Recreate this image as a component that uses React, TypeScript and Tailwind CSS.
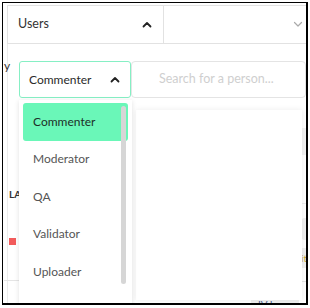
import React from 'react'

const roles = ['Commenter', 'Moderator', 'QA', 'Validator', 'Uploader']

function ChevronUp({ className = '' }: { className?: string }) {
  return (
    <svg width="10" height="7" viewBox="0 0 10 7" className={className}>
      <path d="M1.5 5.5 L5 2 L8.5 5.5" fill="none" stroke="currentColor" strokeWidth="1.8" strokeLinecap="round" strokeLinejoin="round" />
    </svg>
  )
}

function ChevronDown({ className = '' }: { className?: string }) {
  return (
    <svg width="10" height="7" viewBox="0 0 10 7" className={className}>
      <path d="M1.5 1.5 L5 5 L8.5 1.5" fill="none" stroke="currentColor" strokeWidth="1.2" strokeLinecap="round" strokeLinejoin="round" />
    </svg>
  )
}

export default function App() {
  return (
    <div className="w-[310px] h-[308px] bg-white overflow-hidden font-['Lato',sans-serif]">
      <div className="relative ml-[2px] mt-[2px] w-[306px] h-[303px] border-l border-t border-r-2 border-b-2 border-black overflow-hidden">
        {/* table header */}
        <div className="flex ml-[4px] mt-[2px] h-[39px] border-t border-b border-l border-[#e2e2e2]">
          <div className="w-[156px] flex items-center justify-between pl-[10px] pr-[11px] border-r border-[#e2e2e2]">
            <span className="text-[12.5px] text-[#333]">Users</span>
            <ChevronUp className="text-[#222]" />
          </div>
          <div className="flex-1 flex items-center justify-end pr-[3px]">
            <ChevronDown className="text-[#aaa]" />
          </div>
        </div>

        {/* table body behind popups */}
        <div className="flex h-[259px]">
          <div className="w-[16px] flex flex-col border-l border-[#ececec] ml-[4px]">
            <div className="h-[16px]" />
            <div className="h-[12px] -ml-[4px] text-[12px] text-[#333] leading-[12px]">y</div>
            <div className="h-[116px]" />
            <div className="text-[10px] font-bold text-[#333] pl-[1px] leading-[12px]">LA</div>
            <div className="h-[38px]" />
            <div className="w-[7px] h-[7px] bg-[#f25b5b] ml-[1px]" />
            <div className="h-[35px]" />
            <div className="h-px bg-[#e5e5e5] -ml-[4px] w-[20px]" />
          </div>
          <div className="flex-1" />
          <div className="w-[5px] flex flex-col">
            <div className="h-[84px]" />
            <div className="h-[27px] bg-[#f2f2f2]" />
            <div className="h-[48px]" />
            <div className="h-px bg-[#ededed]" />
            <div className="h-[14px]" />
            <div className="h-[22px] bg-[#efefef] rounded-l" />
            <div className="h-[8px]" />
            <div className="h-[20px] bg-[#efefef] text-[10px] leading-[20px] text-[#c9a43a] overflow-hidden">itt</div>
            <div className="h-[13px]" />
            <div className="h-px bg-[#e5e5e5]" />
          </div>
        </div>
        <div className="absolute left-[248px] top-[294px] w-[48px] h-[12px] bg-[#eeeeee] text-[10px] leading-[14px] text-[#4a5a8a] pl-[7px]">IV Lass</div>

        {/* role select */}
        <div className="absolute left-[16px] top-[58px] w-[112px] h-[37px] border border-[#86efc4] rounded-[3px] bg-white flex items-center justify-between pl-[9px] pr-[10px]">
          <span className="text-[12px] text-[#2b2b2b]">Commenter</span>
          <ChevronUp className="text-[#222]" />
        </div>

        {/* search */}
        <div className="absolute left-[128px] top-[58px] w-[175px] h-[37px] border border-[#e4e4e4] rounded-[4px] bg-white flex items-center pl-[27px]">
          <span className="text-[12.5px] text-[#cfcfcf]">Search for a person...</span>
        </div>

        {/* results panel */}
        <div className="absolute left-[133px] top-[107px] w-[166px] h-[190px] bg-white shadow-[0_0_6px_rgba(0,0,0,0.08)]" />

        {/* role menu */}
        <div className="absolute left-[16px] top-[97px] w-[113px] h-[220px] bg-white shadow-[0_1px_5px_rgba(0,0,0,0.12)] px-[4px] pt-[3px]">
          <div className="flex flex-col">
            {roles.map((r, i) => (
              <div
                key={r}
                className={`h-[37.5px] flex items-center pl-[10px] rounded-[3px] text-[12px] ${
                  i === 0 ? 'bg-[#6af7b8] text-[#1d3028]' : 'text-[#555]'
                }`}
              >
                {r}
              </div>
            ))}
          </div>
          <div className="absolute left-[102px] top-[6px] w-[5px] h-[178px] rounded-full bg-[#d6d6d6]" />
        </div>
      </div>
    </div>
  )
}
